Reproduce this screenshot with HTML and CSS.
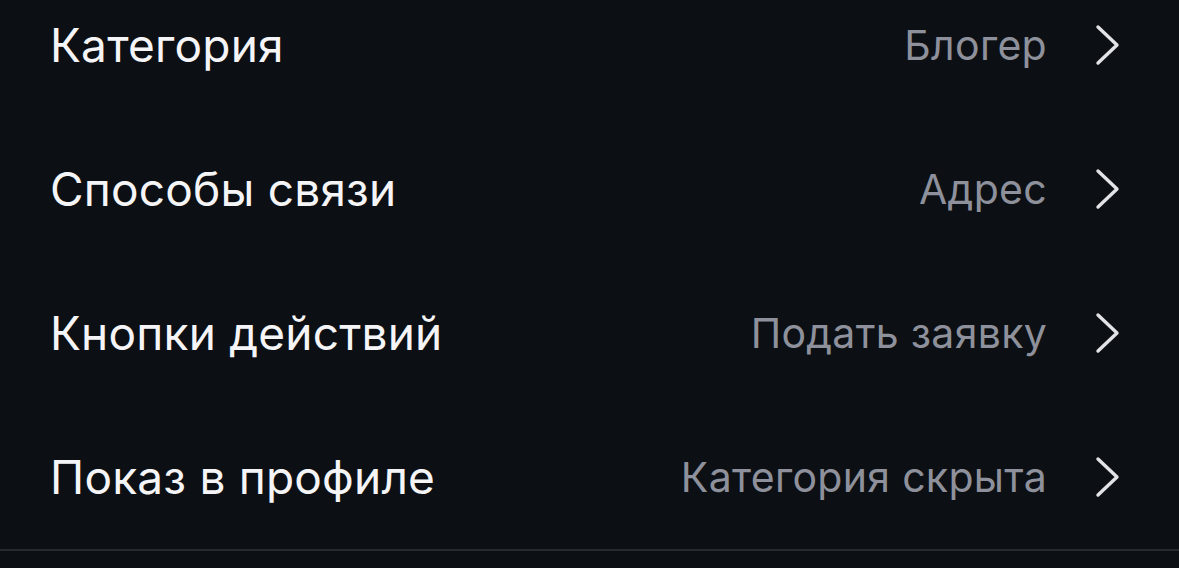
FILE: index.html
```html
<!DOCTYPE html>
<html lang="ru">
<head>
<meta charset="utf-8">
<link rel="stylesheet" href="styles.css">
</head>
<body>
<div class="list">
  <div class="row">
    <span class="label">Категория</span>
    <span class="value">Блогер</span>
    <svg class="chev" viewBox="0 0 26 42" width="26" height="42"><polyline points="3,3 22,21 3,39"/></svg>
  </div>
  <div class="row">
    <span class="label">Способы связи</span>
    <span class="value">Адрес</span>
    <svg class="chev" viewBox="0 0 26 42" width="26" height="42"><polyline points="3,3 22,21 3,39"/></svg>
  </div>
  <div class="row">
    <span class="label">Кнопки действий</span>
    <span class="value">Подать заявку</span>
    <svg class="chev" viewBox="0 0 26 42" width="26" height="42"><polyline points="3,3 22,21 3,39"/></svg>
  </div>
  <div class="row last">
    <span class="label">Показ в профиле</span>
    <span class="value">Категория скрыта</span>
    <svg class="chev" viewBox="0 0 26 42" width="26" height="42"><polyline points="3,3 22,21 3,39"/></svg>
  </div>
</div>
</body>
</html>
```
FILE: styles.css
```css
html, body {
  margin: 0;
  padding: 0;
  background: #0c1014;
  overflow: hidden;
}
body {
  font-family: Inter, "Noto Sans", sans-serif;
}
.list {
  margin-top: -27px;
  border-bottom: 2px solid #26292d;
}
.row {
  height: 144px;
  display: flex;
  align-items: center;
  padding: 0 58px 0 50px;
}
.label {
  flex: 1;
  color: #f5f5f7;
  font-size: 46px;
  letter-spacing: 0.2px;
}
.value {
  color: #8e919b;
  font-size: 41px;
  letter-spacing: 0.3px;
  margin-right: 48px;
}
.chev {
  fill: none;
  stroke: #e2e3e7;
  stroke-width: 3.4;
  stroke-linecap: round;
  stroke-linejoin: round;
}
```
